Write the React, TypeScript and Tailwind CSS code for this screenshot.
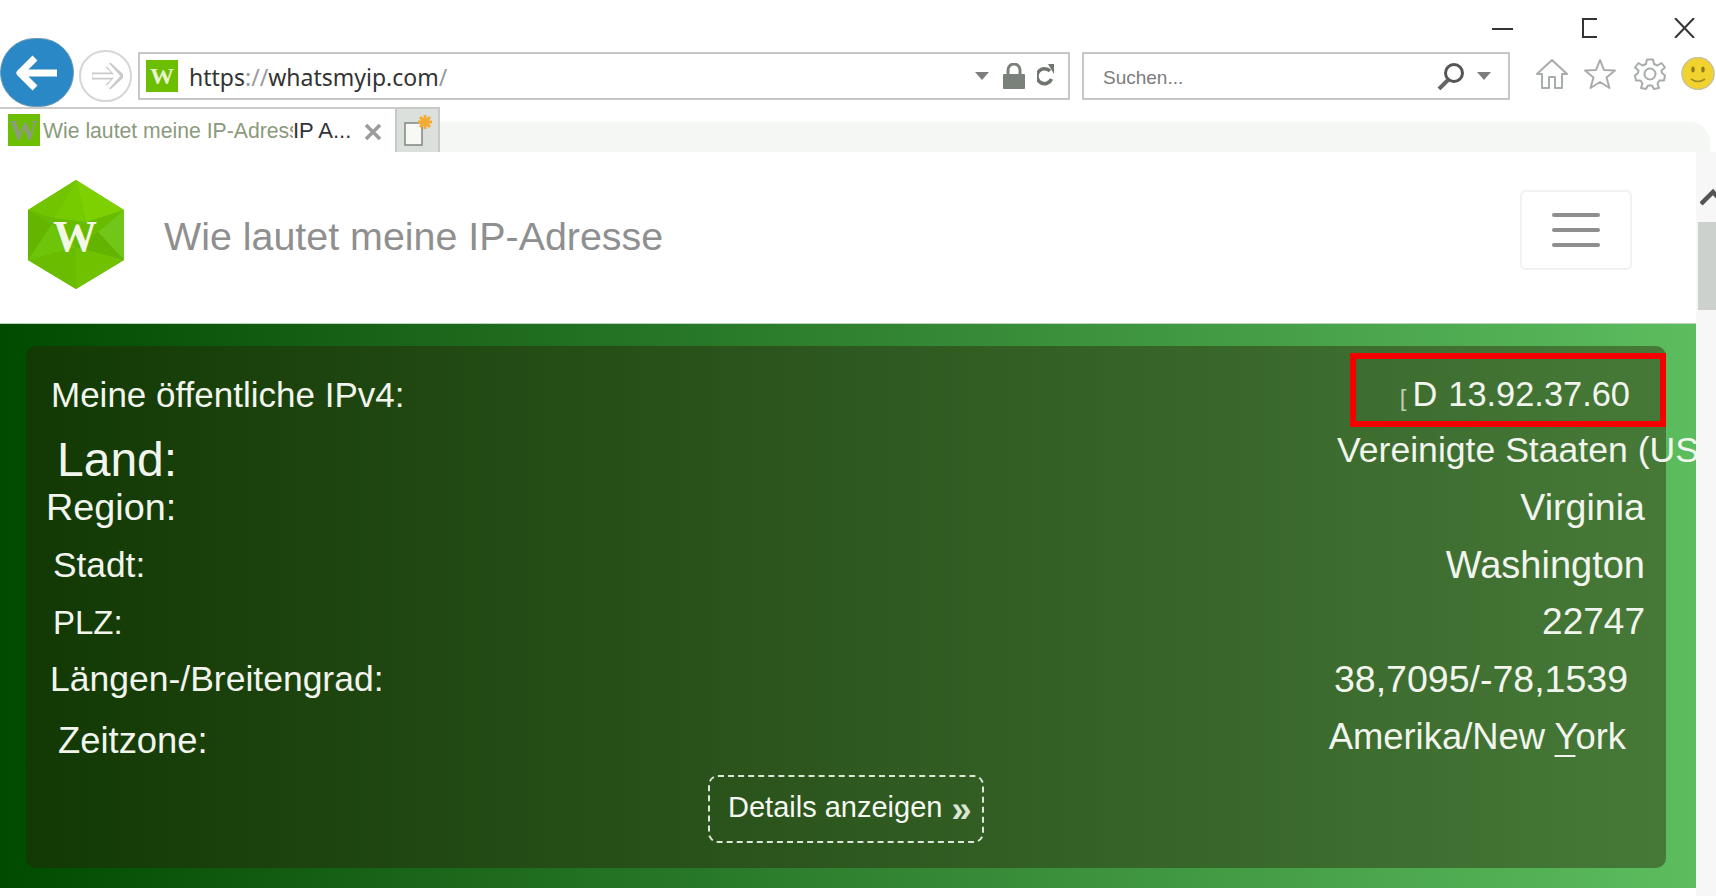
const rows = [
  { label: "Meine öffentliche IPv4:", lc: "pl-[25px] pt-[31px] text-[35px]", value: "13.92.37.60", vc: "pr-[36px] pt-[31px] text-[34.4px]" },
  { label: "Land:", lc: "pl-[31px] pt-[33px] text-[48px]", value: "Vereinigte Staaten (USA)", vc: "pt-[30px] text-[35.6px] w-[329px] shrink-0" },
  { label: "Region:", lc: "pl-[20px] pt-[29px] text-[37.8px]", value: "Virginia", vc: "pr-[21px] pt-[29px] text-[37.6px]" },
  { label: "Stadt:", lc: "pl-[27px] pt-[30px] text-[35.3px]", value: "Washington", vc: "pr-[21px] pt-[29px] text-[38px]" },
  { label: "PLZ:", lc: "pl-[27px] pt-[32px] text-[33px]", value: "22747", vc: "pr-[21px] pt-[29px] text-[37px]" },
  { label: "Längen-/Breitengrad:", lc: "pl-[24px] pt-[31px] text-[35.5px]", value: "38,7095/-78,1539", vc: "pr-[38px] pt-[30px] text-[37.5px]" },
  { label: "Zeitzone:", lc: "pl-[32px] pt-[35px] text-[36.4px]", value: "Amerika/New York", vc: "pr-[40px] pt-[31px] text-[36.4px]" },
];

function Favicon({ dim }: { dim?: boolean }) {
  return (
    <div className="w-[32px] h-[32px] bg-[#6cbf00] flex items-center justify-center shrink-0">
      <span className={`font-['Liberation_Serif',serif] font-bold leading-none ${dim ? "text-[29px] text-[#8f9c80]" : "text-[24px] text-[#e8f4d0]"}`}>W</span>
    </div>
  );
}

function Logo() {
  return (
    <svg width="96" height="109" viewBox="0 0 96 109" className="shrink-0">
      <polygon points="48,0 96,30 96,80 48,109 0,80 0,30" fill="#68bc00" />
      <polygon points="48,0 96,30 58,42" fill="#7fd000" />
      <polygon points="48,0 0,30 26,38" fill="#72c400" />
      <polygon points="48,0 26,38 58,42" fill="#76ca00" />
      <polygon points="96,30 96,80 70,52" fill="#72c61a" />
      <polygon points="0,30 0,80 24,44" fill="#64b400" />
      <polygon points="0,80 48,67 48,109" fill="#6abc00" />
      <polygon points="96,80 48,67 48,109" fill="#70c200" />
      <polygon points="0,80 24,44 48,67" fill="#6ec408" />
      <polygon points="96,80 70,52 48,67" fill="#62b400" />
      <text x="47" y="71" textAnchor="middle" fontFamily="'Liberation Serif', serif" fontWeight="700" fontSize="44" fill="#f3f8e6">W</text>
    </svg>
  );
}

export default function App() {
  return (
    <div className="w-[1716px] h-[896px] overflow-hidden bg-white flex flex-col font-['Liberation_Sans',Arial,sans-serif]">
      {/* window controls */}
      <div className="h-[38px] flex justify-end items-start shrink-0">
        <div className="mt-[28px] w-[21px] h-[2px] bg-[#333]" />
        <div className="ml-[69px] mt-[18px] w-[15px] h-[20px] border-2 border-r-0 border-[#333]" />
        <svg width="21" height="20" viewBox="0 0 21 20" className="ml-[77px] mt-[18px] mr-[21px]">
          <path d="M1 0 L20 20 M20 0 L1 20" stroke="#333" strokeWidth="2" fill="none" />
        </svg>
      </div>

      {/* navigation */}
      <div className="h-[69px] flex items-start shrink-0">
        <div className="w-[74px] h-[69px] rounded-full bg-[#2a88c6] border border-[#6f99b5] flex items-center justify-center shrink-0">
          <svg width="44" height="36" viewBox="0 0 44 36">
            <path d="M20 3 L5 18 L20 33 M5 18 H42" stroke="#fff" strokeWidth="7" fill="none" strokeLinejoin="round" />
          </svg>
        </div>
        <div className="ml-[5px] mt-[12px] w-[53px] h-[52px] rounded-full border-2 border-[#d6d6d6] flex items-center justify-center shrink-0">
          <svg width="34" height="28" viewBox="0 0 34 28">
            <path d="M3 14 H30 M19 3 L31 14 L19 25" stroke="#c8cac8" strokeWidth="7" fill="none" strokeLinejoin="miter" />
            <path d="M3.5 14 H29 M19 3 L29 14 L19 25" stroke="#ffffff" strokeWidth="3.5" fill="none" strokeLinejoin="miter" />
          </svg>
        </div>
        <div className="ml-[6px] mt-[14px] w-[932px] h-[48px] border-2 border-[#c6c6c6] flex items-center pl-[6px] shrink-0">
          <Favicon />
          <span className="ml-[11px] mt-[3px] font-['Noto_Sans',sans-serif] text-[23px] leading-none text-[#333]">
            https<span className="text-[#999]">://</span>whatsmyip.com<span className="text-[#999]">/</span>
          </span>
          <div className="ml-auto flex items-center pr-[14px]">
            <div className="w-0 h-0 border-x-[7px] border-x-transparent border-t-[8px] border-t-[#7d7d7d]" />
            <svg width="22" height="26" viewBox="0 0 22 26" className="ml-[14px]">
              <path d="M5 12 V7 a6 6 0 0 1 12 0 V12" stroke="#7a807a" strokeWidth="3" fill="none" />
              <rect x="0" y="11" width="22" height="15" rx="1" fill="#7a807a" />
            </svg>
            <svg width="17" height="24" viewBox="0 0 17 24" className="ml-[12px]">
              <path d="M13 7 A7.5 7.5 0 1 0 14.5 15" stroke="#6f756f" strokeWidth="3.5" fill="none" />
              <path d="M11 0 L17 0 L17 10 Z" fill="#6f756f" />
            </svg>
          </div>
        </div>
        <div className="ml-[12px] mt-[14px] w-[428px] h-[48px] border-2 border-[#c6c6c6] flex items-center pl-[19px] shrink-0">
          <span className="mt-[2px] text-[19px] leading-none text-[#7c7c7c]">Suchen...</span>
          <div className="ml-auto flex items-center pr-[17px]">
            <svg width="28" height="28" viewBox="0 0 28 28">
              <circle cx="17" cy="11" r="8.5" stroke="#555" strokeWidth="3" fill="none" />
              <path d="M11 18 L2 27" stroke="#666" strokeWidth="4" />
            </svg>
            <div className="ml-[12px] w-0 h-0 border-x-[7px] border-x-transparent border-t-[8px] border-t-[#7d7d7d]" />
          </div>
        </div>
        <div className="ml-[26px] mt-[19px] flex items-center shrink-0">
          <svg width="32" height="32" viewBox="0 0 32 32" fill="none" stroke="#a9adaa" strokeWidth="2" strokeLinejoin="round">
            <path d="M16 2 L31 16 L26 16 V30 H19 V19 H13 V30 H6 V16 L1 16 Z" />
          </svg>
          <svg width="34" height="32" viewBox="0 0 34 32" className="ml-[15px]" fill="none" stroke="#a9adaa" strokeWidth="2" strokeLinejoin="round">
            <path d="M17 2 L21 12 L32 12.5 L23.5 19.5 L26.5 30 L17 24 L7.5 30 L10.5 19.5 L2 12.5 L13 12 Z" />
          </svg>
          <svg width="32" height="32" viewBox="0 0 32 32" className="ml-[17px]" fill="none" stroke="#a9adaa" strokeWidth="2" strokeLinejoin="round">
            <circle cx="16" cy="16" r="5.5" />
            <path d="M13 1.5 H19 L20 6 L23.5 7.5 L27.5 5 L31 9.5 L27.5 12.5 L28 15 L31 17.5 L30 22.5 L25.5 22.5 L23.5 25.5 L25 30 L20 31 L18 27.5 H14 L12 31 L7 30 L8.5 25.5 L6.5 22.5 L2 22.5 L1 17.5 L4 15 L4.5 12.5 L1 9.5 L4.5 5 L8.5 7.5 L12 6 Z" />
          </svg>
          <svg width="34" height="33" viewBox="0 0 34 33" className="ml-[15px]">
            <ellipse cx="17" cy="16.5" rx="16" ry="16" fill="#f2d22e" stroke="#c8c298" strokeWidth="1.5" />
            <ellipse cx="12" cy="12.5" rx="1.7" ry="3" fill="#8a7a20" />
            <ellipse cx="22" cy="12.5" rx="1.7" ry="3" fill="#8a7a20" />
            <path d="M10 22 Q17 27 24 22" stroke="#a08e28" strokeWidth="1.6" fill="none" />
          </svg>
        </div>
      </div>

      {/* tabs */}
      <div className="h-[45px] flex items-start shrink-0">
        <div className="w-[395px] h-[45px] border-t-2 border-[#cbcbcb] flex items-start pl-[8px] pt-[5px] shrink-0">
          <Favicon dim />
          <span className="ml-[3px] mt-[6px] w-[250px] overflow-hidden whitespace-nowrap text-[21.2px] leading-none text-[#8c9a7c]">Wie lautet meine IP-Adress</span>
          <span className="mt-[6px] w-[60px] whitespace-nowrap text-[22px] leading-none text-[#333]">IP A...</span>
          <svg width="18" height="18" viewBox="0 0 18 18" className="ml-[11px] mt-[9px]">
            <path d="M2 2 L16 16 M16 2 L2 16" stroke="#9b9b9b" strokeWidth="3.5" />
          </svg>
        </div>
        <div className="w-[45px] h-[45px] bg-[#dbe0dc] border-2 border-b-0 border-[#c6c9c6] flex items-center justify-center shrink-0">
          <svg width="32" height="34" viewBox="0 0 32 34">
            <path d="M3 9 H20 V31 H3 Z" fill="#f8f8f4" stroke="#7f8580" strokeWidth="1.5" />
            <path d="M23 1 V15 M16 8 H30 M18 3 L28 13 M28 3 L18 13" stroke="#f5aa32" strokeWidth="3" />
          </svg>
        </div>
        <div className="mt-[15px] w-[1270px] h-[30px] bg-[#f4f7f4] rounded-tr-[20px] shrink-0" />
      </div>

      {/* page */}
      <div className="flex-1 flex min-h-0">
        <div className="w-[1696px] flex flex-col shrink-0">
          <header className="h-[171px] flex items-start shrink-0">
            <div className="ml-[28px] mt-[28px]"><Logo /></div>
            <h1 className="ml-[40px] mt-[60px] text-[39.4px] leading-[48px] font-normal text-[#8f8f8f] whitespace-nowrap">Wie lautet meine IP-Adresse</h1>
            <button className="ml-auto mr-[64px] mt-[38px] w-[112px] h-[80px] rounded-[6px] border-2 border-[#f1f1f1] flex flex-col items-center justify-center gap-[11px]">
              <span className="w-[48px] h-[4px] rounded bg-[#8e8e8e]" />
              <span className="w-[48px] h-[4px] rounded bg-[#8e8e8e]" />
              <span className="w-[48px] h-[4px] rounded bg-[#8e8e8e]" />
            </button>
          </header>

          <section className="h-[565px] pl-[26px] pr-[30px] pt-[22px] pb-[20px] bg-gradient-to-r from-[#004b00] to-[#5cbd5e] border-t border-[#bcd0bc] overflow-hidden shrink-0">
            <div className="relative h-full rounded-[10px] bg-[rgba(42,32,7,0.42)] text-[#f2f5ee] flex flex-col">
              {/* highlight drawn over the IP value */}
              <div className="absolute left-[1324px] top-[7px] w-[316px] h-[74px] border-[6px] border-[#f40000]" />
              {rows.map((r) => (
                <div key={r.label} className="h-[57px] flex justify-between items-start shrink-0">
                  <span className={`leading-none whitespace-nowrap ${r.lc}`}>{r.label}</span>
                  <span className={`leading-none whitespace-nowrap ${r.vc}`}>
                    {r.value === "13.92.37.60" ? (
                      <>
                        <span className="text-[24px] opacity-70 mr-[6px]">[</span>D<span className="ml-[11px]">13.92.37.60</span>
                      </>
                    ) : r.value === "Amerika/New York" ? (
                      <>
                        Amerika/New <span className="underline decoration-2 underline-offset-[6px]">Y</span>ork
                      </>
                    ) : (
                      r.value
                    )}
                  </span>
                </div>
              ))}
              <div className="flex justify-center">
                <button className="mt-[30px] w-[276px] h-[68px] rounded-[10px] border-2 border-dashed border-[#dfe6da] flex items-center pl-[18px] pb-[4px] text-[29px] leading-none text-[#f6f8f2] shrink-0">
                  Details anzeigen
                  <span className="ml-[9px] mt-[6px] text-[36px] font-bold text-[#dbe6d2]">»</span>
                </button>
              </div>
            </div>
          </section>
        </div>

        <aside className="w-[20px] bg-[#f6f7f6] flex flex-col items-end shrink-0 overflow-hidden">
          <svg width="16" height="18" viewBox="0 0 16 18" className="mt-[36px] shrink-0">
            <path d="M1 16 L13 4 L24 16" stroke="#555" strokeWidth="4.5" fill="none" />
          </svg>
          <div className="mt-[16px] w-[18px] h-[88px] bg-[#cdd1cd] shrink-0" />
        </aside>
      </div>
    </div>
  );
}
